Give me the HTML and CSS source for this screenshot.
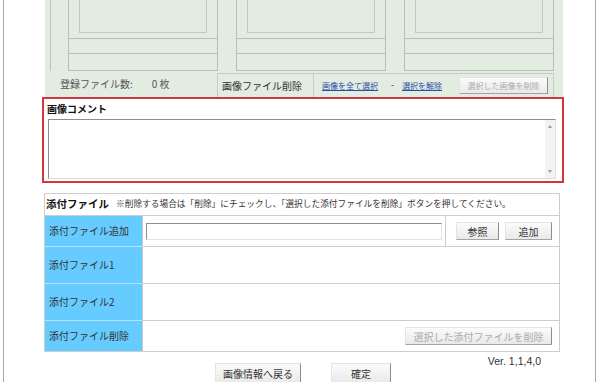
FILE: index.html
```html
<!DOCTYPE html>
<html lang="ja">
<head>
    <meta charset="UTF-8">
    <meta name="viewport" content="width=device-width, initial-scale=1.0">
    <title>画像情報編集</title>
    <link rel="stylesheet" href="styles.css">
</head>
<body>
<div class="frame">
    <div class="content">
        <div class="gallery">
            <div class="cells">
                <div class="cell">
                    <div class="cell-img"><div class="thumb"></div></div>
                    <div class="cell-row"></div>
                    <div class="cell-row last"></div>
                </div>
                <div class="cell">
                    <div class="cell-img"><div class="thumb"></div></div>
                    <div class="cell-row"></div>
                    <div class="cell-row last"></div>
                </div>
                <div class="cell">
                    <div class="cell-img"><div class="thumb"></div></div>
                    <div class="cell-row"></div>
                    <div class="cell-row last"></div>
                </div>
            </div>
            <div class="gallery-foot">
                <div class="count"><span>登録ファイル数:</span><span class="num">0 枚</span></div>
                <div class="actions">
                    <span class="actions-label">画像ファイル削除</span>
                    <a href="#" class="link">画像を全て選択</a>
                    <span class="dash">-</span>
                    <a href="#" class="link">選択を解除</a>
                    <button class="btn btn-small" disabled>選択した画像を削除</button>
                </div>
            </div>
        </div>

        <div class="comment">
            <div class="comment-title">画像コメント</div>
            <div class="comment-field">
                <textarea></textarea>
                <div class="scrollbar"><span class="arrow up"></span><span class="arrow down"></span></div>
            </div>
        </div>

        <div class="attach">
            <div class="attach-head">
                <b>添付ファイル</b>
                <span class="note">※削除する場合は「削除」にチェックし、「選択した添付ファイルを削除」ボタンを押してください。</span>
            </div>
            <div class="attach-row add">
                <div class="label">添付ファイル追加</div>
                <div class="field"><input type="text"></div>
                <div class="tools">
                    <button class="btn btn-ref">参照</button>
                    <button class="btn btn-add">追加</button>
                </div>
            </div>
            <div class="attach-row tall">
                <div class="label">添付ファイル1</div>
                <div class="field"></div>
            </div>
            <div class="attach-row tall">
                <div class="label">添付ファイル2</div>
                <div class="field"></div>
            </div>
            <div class="attach-row last">
                <div class="label">添付ファイル削除</div>
                <div class="field right">
                    <button class="btn btn-del" disabled>選択した添付ファイルを削除</button>
                </div>
            </div>
        </div>

        <div class="footer">
            <div></div>
            <div class="footer-buttons">
                <button class="btn btn-back">画像情報へ戻る</button>
                <button class="btn btn-ok">確定</button>
            </div>
            <div class="version">Ver. 1,1,4,0</div>
        </div>
    </div>
</div>
</body>
</html>
```

FILE: styles.css
```css
html {
    overflow: hidden;
}
body {
    margin: 0;
    background: #fff;
    font-family: "Noto Sans CJK JP", sans-serif;
    font-size: 10px;
    line-height: 1.2;
    color: #333;
}
.frame {
    display: flow-root;
    margin-left: 3px;
    width: 591px;
    height: 382px;
    overflow: hidden;
    border-left: 1px solid #a8a8a8;
    border-right: 1px solid #a8a8a8;
}
.content {
    margin-left: 38px;
    width: 522px;
}

/* image list */
.gallery {
    margin: -61px 1px 0 3px;
    background: #e2ece0;
}
.cells {
    display: flex;
    gap: 18px;
    margin-left: 5px;
    padding-left: 17px;
    border-left: 1px solid #bcc6ba;
}
.cell {
    width: 150px;
    box-sizing: border-box;
    border: 1px solid #b5bfb3;
}
.cell-img {
    height: 99px;
    box-sizing: border-box;
    padding: 10px 0 0 10px;
    border-bottom: 1px solid #b5bfb3;
}
.thumb {
    width: 128px;
    height: 83px;
    box-sizing: border-box;
    border: 1px solid #c2cac0;
}
.cell-row {
    height: 15px;
    box-sizing: border-box;
    border-bottom: 1px solid #b5bfb3;
}
.cell-row.last {
    height: 16px;
    border-bottom: none;
}
.gallery-foot {
    display: flex;
    height: 26px;
}
.count {
    width: 172px;
    box-sizing: border-box;
    padding-left: 15px;
    display: flex;
    align-items: center;
    color: #555;
}
.count .num {
    margin-left: 19px;
}
.actions {
    width: 337px;
    margin-top: 2px;
    box-sizing: border-box;
    border: 1px solid #c5ccc3;
    border-bottom: none;
    display: flex;
    align-items: center;
}
.actions-label {
    align-self: stretch;
    width: 96px;
    box-sizing: border-box;
    padding-left: 4px;
    border-right: 1px solid #c5ccc3;
    display: flex;
    align-items: center;
}
.link {
    font-size: 8px;
    color: #2a4fa8;
    text-decoration: underline;
    margin-left: 8px;
}
.dash {
    margin-left: 13px;
    font-size: 9px;
}
.btn {
    font-family: "Noto Sans CJK JP", sans-serif;
    font-size: 10px;
    color: #333;
    height: 18px;
    padding: 0;
    background: linear-gradient(#fbfbfb, #e9e9e9);
    border: 1px solid;
    border-color: #e4e4e4 #8c8c8c #a4a4a4 #e4e4e4;
    cursor: pointer;
}
.btn:disabled {
    color: #ababab;
    cursor: default;
}
.btn-small {
    width: 89px;
    height: 17px;
    font-size: 8px;
    margin-left: auto;
    margin-right: 5px;
}

/* comment */
.comment {
    height: 86px;
    box-sizing: border-box;
    padding: 0 6px 0 4px;
    border: 2px solid #d23640;
}
.comment-title {
    height: 20px;
    margin-left: -1px;
    display: flex;
    align-items: center;
    font-weight: bold;
    color: #111;
}
.comment-field {
    height: 60px;
    box-sizing: border-box;
    display: flex;
    border: 1px solid;
    border-color: #8e8e8e #dedede #dedede #8e8e8e;
}
.comment-field textarea {
    flex: 1;
    margin: 0;
    padding: 2px;
    border: none;
    resize: none;
    outline: none;
    font: inherit;
}
.scrollbar {
    width: 10px;
    box-sizing: border-box;
    padding: 5px 0;
    background: #f3f3f3;
    display: flex;
    flex-direction: column;
    justify-content: space-between;
    align-items: center;
}
.arrow {
    width: 0;
    height: 0;
    border-left: 2px solid transparent;
    border-right: 2px solid transparent;
}
.arrow.up {
    border-bottom: 3px solid #999;
}
.arrow.down {
    border-top: 3px solid #999;
}

/* attachments */
.attach {
    margin: 10px 0 0 2px;
    width: 516px;
    box-sizing: border-box;
    border: 1px solid #cdcdcd;
}
.attach-head {
    height: 22px;
    box-sizing: border-box;
    padding-left: 1px;
    border-bottom: 1px solid #cdcdcd;
    display: flex;
    align-items: center;
}
.attach-head b {
    font-size: 10.5px;
    color: #111;
}
.note {
    margin-left: 7px;
    font-size: 8.7px;
}
.attach-row {
    display: flex;
    height: 31px;
}
.attach-row.tall {
    height: 37px;
}
.attach-row.last {
    height: 30px;
}
.label {
    width: 98px;
    box-sizing: border-box;
    padding-left: 4px;
    background: #66ccff;
    border-right: 1px solid #c8c8c8;
    border-bottom: 1px solid #b8e2f8;
    display: flex;
    align-items: center;
}
.field {
    flex: 1;
    padding-left: 3px;
    border-bottom: 1px solid #cdcdcd;
    display: flex;
    align-items: center;
}
.attach-row.last .label,
.attach-row.last .field {
    border-bottom: none;
}
.add .field {
    flex: none;
    width: 303px;
    box-sizing: border-box;
    border-right: 1px solid #cdcdcd;
}
.field input {
    width: 296px;
    height: 17px;
    box-sizing: border-box;
    margin: 0;
    border: 1px solid;
    border-color: #8e8e8e #e2e2e2 #e2e2e2 #8e8e8e;
}
.tools {
    flex: 1;
    padding-left: 10px;
    border-bottom: 1px solid #cdcdcd;
    display: flex;
    align-items: center;
    gap: 6px;
}
.btn-ref {
    width: 43px;
}
.btn-add {
    width: 47px;
}
.field.right {
    justify-content: flex-end;
    padding-right: 7px;
}
.btn-del {
    width: 147px;
}

/* footer */
.footer {
    display: grid;
    grid-template-columns: 1fr auto 1fr;
    margin-top: 2px;
}
.footer-buttons {
    display: flex;
    gap: 30px;
    margin-top: 9px;
}
.footer .btn {
    height: 21px;
}
.btn-back {
    width: 86px;
}
.btn-ok {
    width: 60px;
}
.version {
    justify-self: end;
    padding-right: 23px;
    font-family: "Liberation Sans", sans-serif;
    font-size: 10.5px;
    line-height: 12px;
    margin-top: 1px;
}
```
